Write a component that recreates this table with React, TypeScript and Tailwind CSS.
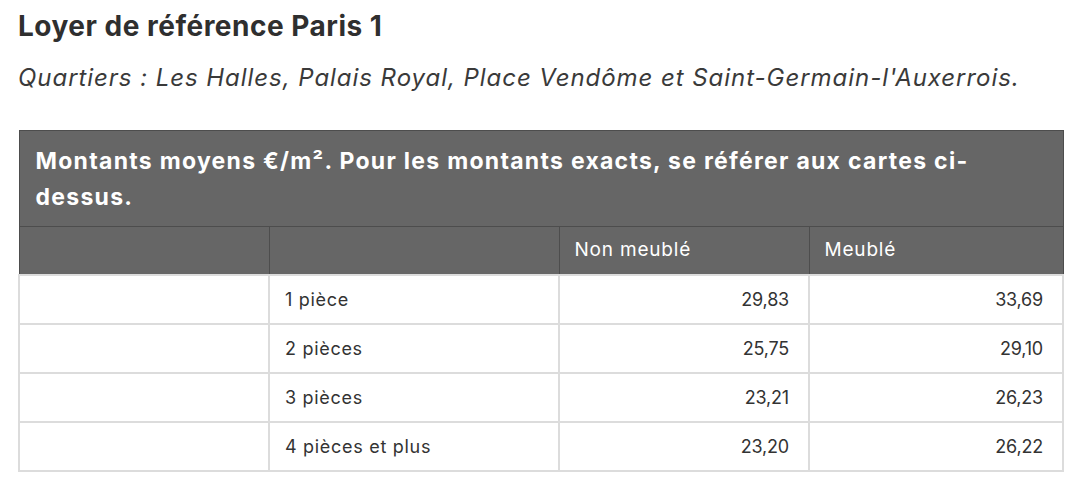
import React from "react";

const rows = [
  { label: "1 pièce", a: "29,83", b: "33,69" },
  { label: "2 pièces", a: "25,75", b: "29,10" },
  { label: "3 pièces", a: "23,21", b: "26,23" },
  { label: "4 pièces et plus", a: "23,20", b: "26,22" },
];

export default function App() {
  return (
    <div className="min-h-[491px] bg-white px-[18px] pt-[8px] text-[#333333] [font-family:Inter,'Noto_Sans',sans-serif]">
      <h1 className="text-[28px] font-bold leading-[36px] tracking-[0.5px] text-[#2f2f2f]">
        Loyer de référence Paris 1
      </h1>
      <p className="mt-[17px] text-[24px] italic leading-[34px] tracking-[0.95px] text-[#3a3a3a]">
        Quartiers : Les Halles, Palais Royal, Place Vendôme et Saint-Germain-l'Auxerrois.
      </p>
      <table className="mt-[35px] w-[1044px] table-fixed border-collapse">
        <colgroup>
          <col className="w-[250px]" />
          <col className="w-[290px]" />
          <col className="w-[250px]" />
          <col className="w-[254px]" />
        </colgroup>
        <thead>
          <tr className="h-[96px]">
            <th
              colSpan={4}
              className="border border-[#4d4d4d] bg-[#666666] px-[16px] text-left align-middle text-[23px] font-bold leading-[36px] tracking-[1.28px] text-white"
            >
              Montants moyens €/m². Pour les montants exacts, se référer aux cartes ci-
              <br />
              dessus.
            </th>
          </tr>
          <tr className="h-[48px]">
            <th className="border border-[#4d4d4d] bg-[#666666]" />
            <th className="border border-[#4d4d4d] bg-[#666666]" />
            <th className="border border-[#4d4d4d] bg-[#666666] px-[15px] text-left text-[19px] font-normal tracking-[0.8px] text-white">
              Non meublé
            </th>
            <th className="border border-[#4d4d4d] bg-[#666666] px-[15px] text-left text-[19px] font-normal tracking-[0.8px] text-white">
              Meublé
            </th>
          </tr>
        </thead>
        <tbody>
          {rows.map((r) => (
            <tr key={r.label} className="h-[49px] text-[#333333]">
              <td className="border-2 border-[#dcdcdc]" />
              <td className="border-2 border-[#dcdcdc] px-[15px] text-[18px] tracking-[0.7px]">{r.label}</td>
              <td className="border-2 border-[#dcdcdc] px-[19px] text-right text-[18px] tracking-[-0.2px]">{r.a}</td>
              <td className="border-2 border-[#dcdcdc] px-[19px] text-right text-[18px] tracking-[-0.2px]">{r.b}</td>
            </tr>
          ))}
        </tbody>
      </table>
    </div>
  );
}
